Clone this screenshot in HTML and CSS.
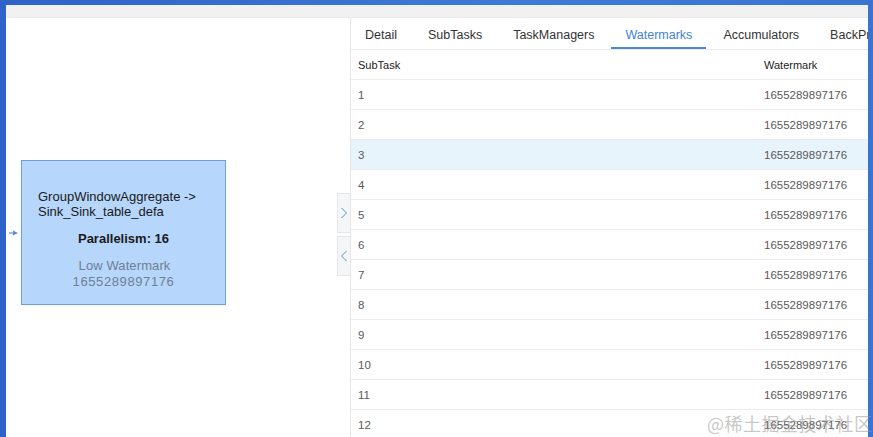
FILE: index.html
```html
<!DOCTYPE html>
<html>
<head>
<meta charset="utf-8">
<link rel="stylesheet" href="styles.css">
</head>
<body>
<div class="window">
  <div class="topbar"></div>
  <div class="main">
    <div class="canvas">
      <div class="edge">
        <svg width="10" height="6" viewBox="0 0 10 6"><path d="M0 3H5" stroke="#5a8fd8" stroke-width="1.2"/><path d="M4 0.5L9 3L4 5.5Z" fill="#5a8fd8"/></svg>
      </div>
      <div class="node">
        <div class="node-title">GroupWindowAggregate -&gt;<br>Sink_Sink_table_defa</div>
        <div class="node-par">Parallelism: 16</div>
        <div class="node-wm">
          <div class="wm-label">Low Watermark</div>
          <div class="wm-value">1655289897176</div>
        </div>
      </div>
      <div class="toggles">
        <div class="toggle"><svg width="8" height="12" viewBox="0 0 8 12"><path d="M1.5 1L6.5 6L1.5 11" fill="none" stroke="#5a8fd8" stroke-width="1"/></svg></div>
        <div class="toggle"><svg width="8" height="12" viewBox="0 0 8 12"><path d="M6.5 1L1.5 6L6.5 11" fill="none" stroke="#5a8fd8" stroke-width="1"/></svg></div>
      </div>
    </div>
    <div class="panel">
      <div class="tabs">
        <div class="tab">Detail</div>
        <div class="tab">SubTasks</div>
        <div class="tab">TaskManagers</div>
        <div class="tab active">Watermarks</div>
        <div class="tab">Accumulators</div>
        <div class="tab">BackPressure</div>
      </div>
      <table class="grid">
        <thead>
          <tr><th class="c1">SubTask</th><th class="c2">Watermark</th></tr>
        </thead>
        <tbody>
          <tr><td>1</td><td>1655289897176</td></tr>
          <tr><td>2</td><td>1655289897176</td></tr>
          <tr class="hover"><td>3</td><td>1655289897176</td></tr>
          <tr><td>4</td><td>1655289897176</td></tr>
          <tr><td>5</td><td>1655289897176</td></tr>
          <tr><td>6</td><td>1655289897176</td></tr>
          <tr><td>7</td><td>1655289897176</td></tr>
          <tr><td>8</td><td>1655289897176</td></tr>
          <tr><td>9</td><td>1655289897176</td></tr>
          <tr><td>10</td><td>1655289897176</td></tr>
          <tr><td>11</td><td>1655289897176</td></tr>
          <tr><td>12</td><td>1655289897176</td></tr>
        </tbody>
      </table>
    </div>
  </div>
</div>
<div class="wmark">@稀土掘金技术社区</div>
</body>
</html>
```
FILE: styles.css
```css
html, body {
  margin: 0;
  padding: 0;
  height: 100%;
  overflow: hidden;
}
body {
  background: linear-gradient(90deg, #2f63c9 0%, #3d7bd6 60%, #3a74d2 100%);
  font-family: "Liberation Sans", Arial, sans-serif;
  padding: 5px 5px 0 6px;
  box-sizing: border-box;
}
.window {
  background: #fff;
  height: 100%;
  display: flex;
  flex-direction: column;
  overflow: hidden;
}
.topbar {
  height: 12px;
  background: #f1f1f1;
  border-bottom: 1px solid #e9e9e9;
  flex: none;
}
.main {
  flex: 1;
  display: flex;
  min-height: 0;
}
.canvas {
  width: 344px;
  flex: none;
  position: relative;
  background: #fff;
}
.edge {
  position: absolute;
  left: 3px;
  top: 212px;
  line-height: 0;
}
.node {
  position: absolute;
  left: 15px;
  top: 142px;
  width: 203px;
  height: 143px;
  background: #b6d6fb;
  border: 1px solid #6f9fd9;
  box-shadow: 0 2px 4px rgba(0,0,0,0.04);
  box-sizing: content-box;
}
.node-title {
  margin: 28px 0 0 16px;
  font-size: 13px;
  line-height: 15px;
  color: #1a1a1a;
}
.node-par {
  margin-top: 12px;
  text-align: center;
  font-weight: bold;
  font-size: 13px;
  color: #1a1a1a;
}
.node-wm {
  margin-top: 12px;
  text-align: center;
  font-size: 13px;
  line-height: 16px;
  color: #6f7f95;
}
.wm-label {
  letter-spacing: 0.1px;
  padding-left: 2px;
}
.wm-value {
  letter-spacing: 0.6px;
}
.toggles {
  position: absolute;
  right: 0;
  top: 175px;
  display: flex;
  flex-direction: column;
  gap: 3px;
}
.toggle {
  width: 12px;
  height: 38px;
  background: #f5f6f7;
  border: 1px solid #e6e6e6;
  border-right: none;
  display: flex;
  align-items: center;
  justify-content: center;
}
.panel {
  flex: 1;
  border-left: 1px solid #e6e6e6;
  min-width: 0;
  overflow: hidden;
}
.tabs {
  display: flex;
  gap: 3px;
  height: 31px;
  border-bottom: 1px solid #ebebeb;
  white-space: nowrap;
  overflow: hidden;
}
.tab {
  box-sizing: border-box;
  height: 31px;
  padding: 4px 14px 0;
  font-size: 12.5px;
  color: #333;
  line-height: 26px;
  flex: none;
}
.tab.active {
  color: #3f82d8;
  border-bottom: 2px solid #4a88d8;
}
.grid {
  border-collapse: collapse;
  width: 532px;
  table-layout: fixed;
}
.grid th {
  text-align: left;
  font-weight: normal;
  font-size: 11px;
  color: #222;
  height: 29px;
  padding: 0 7px;
  border-bottom: 1px solid #eeeeee;
}
.grid .c1 { width: 392px; }
.grid td {
  font-size: 11.5px;
  color: #5a5a5a;
  height: 29px;
  padding: 0 7px;
  border-bottom: 1px solid #ececec;
}
.grid tr.hover td {
  background: #e8f4fc;
}
.wmark {
  position: absolute;
  left: 707px;
  top: 410px;
  font-family: "Noto Sans CJK SC", sans-serif;
  font-size: 18px;
  color: rgba(150,150,150,0.55);
  letter-spacing: 0.5px;
}
```
